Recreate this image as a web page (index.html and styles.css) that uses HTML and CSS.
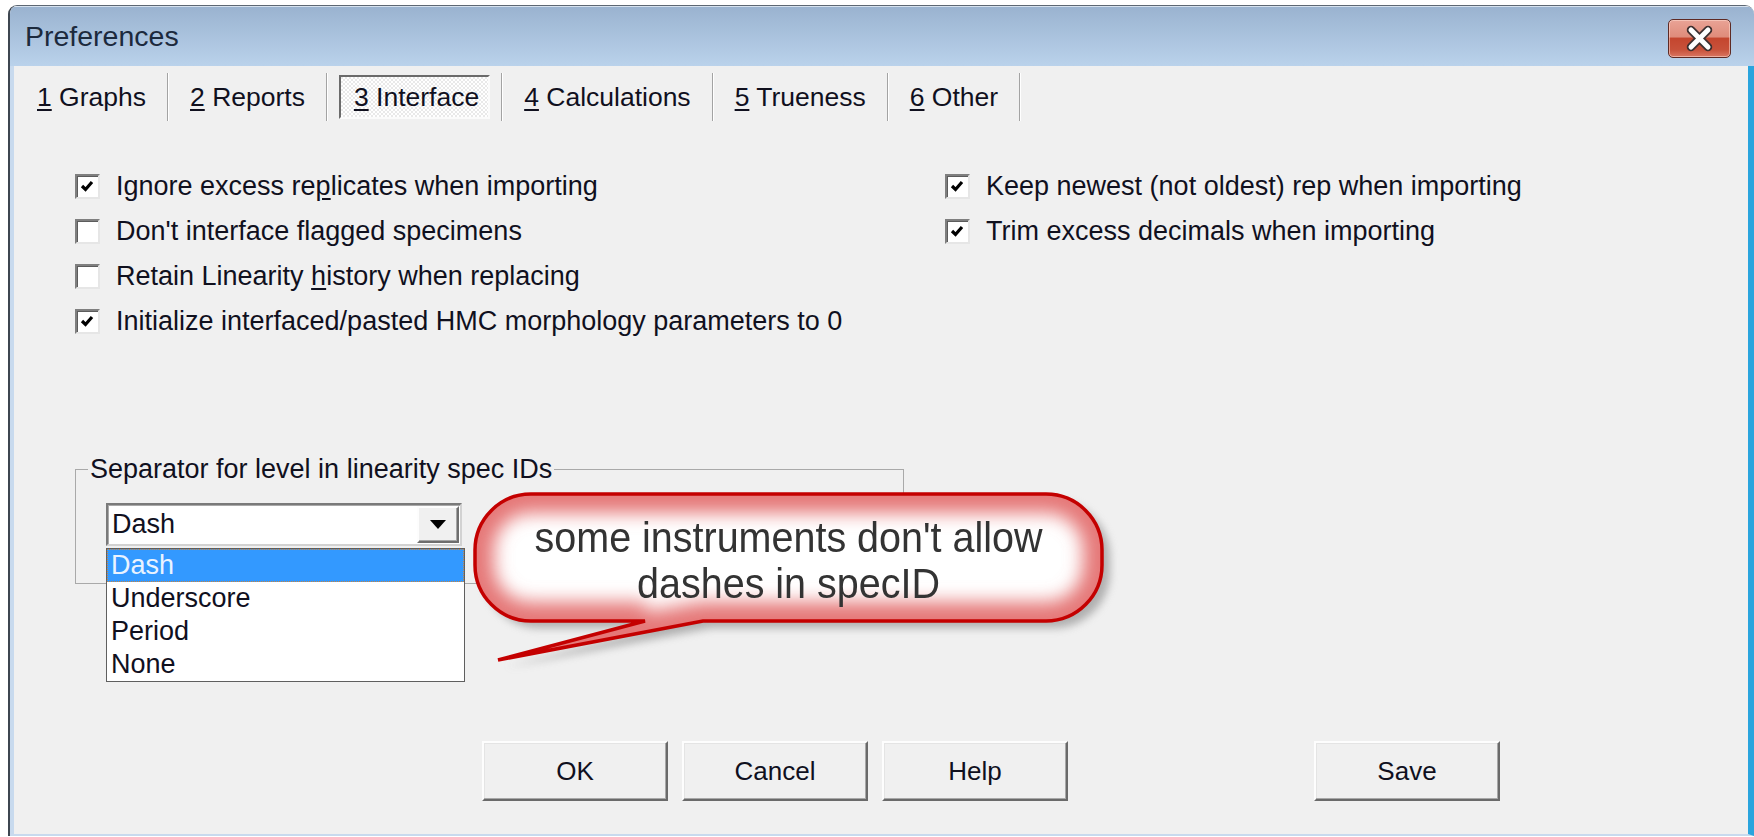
FILE: index.html
```html
<!DOCTYPE html>
<html lang="en">
<head>
<meta charset="utf-8">
<title>Preferences</title>
<link rel="stylesheet" href="styles.css">
</head>
<body>
<div class="window">
  <div class="titlebar">
    <span class="title">Preferences</span>
    <button class="close" type="button" aria-label="Close">
      <svg width="63" height="39" viewBox="0 0 63 39">
        <path d="M23 11 L40 28 M40 11 L23 28" stroke="#3d3030" stroke-width="8.5" stroke-linecap="round"/>
        <path d="M23 11 L40 28 M40 11 L23 28" stroke="#ffffff" stroke-width="5" stroke-linecap="round"/>
      </svg>
    </button>
  </div>

  <div class="client">
    <nav class="tabs">
      <div class="tab"><span><u>1</u> Graphs</span></div>
      <span class="sep"></span>
      <div class="tab"><span><u>2</u> Reports</span></div>
      <span class="sep"></span>
      <div class="tab active"><span><u>3</u> Interface</span></div>
      <span class="sep"></span>
      <div class="tab"><span><u>4</u> Calculations</span></div>
      <span class="sep"></span>
      <div class="tab"><span><u>5</u> Trueness</span></div>
      <span class="sep"></span>
      <div class="tab"><span><u>6</u> Other</span></div>
      <span class="sep"></span>
    </nav>

    <div class="options">
      <div class="col col-left">
        <div class="check">
          <span class="box"><svg viewBox="0 0 21 21"><path d="M5 10 L8.5 13.5 L15 6" /></svg></span>
          <span>Ignore excess re<u>p</u>licates when importing</span>
        </div>
        <div class="check">
          <span class="box"></span>
          <span>Don't interface flagged specimens</span>
        </div>
        <div class="check">
          <span class="box"></span>
          <span>Retain Linearity <u>h</u>istory when replacing</span>
        </div>
        <div class="check">
          <span class="box"><svg viewBox="0 0 21 21"><path d="M5 10 L8.5 13.5 L15 6" /></svg></span>
          <span>Initialize interfaced/pasted HMC morphology parameters to 0</span>
        </div>
      </div>
      <div class="col">
        <div class="check">
          <span class="box"><svg viewBox="0 0 21 21"><path d="M5 10 L8.5 13.5 L15 6" /></svg></span>
          <span>Keep newest (not oldest) rep when importing</span>
        </div>
        <div class="check">
          <span class="box"><svg viewBox="0 0 21 21"><path d="M5 10 L8.5 13.5 L15 6" /></svg></span>
          <span>Trim excess decimals when importing</span>
        </div>
      </div>
    </div>

    <fieldset class="group">
      <legend>Separator for level in linearity spec IDs</legend>
      <div class="combo">
        <span class="combo-value">Dash</span>
        <span class="combo-btn">
          <svg width="16" height="9" viewBox="0 0 16 9"><path d="M0 0 H16 L8 9 Z" fill="#000"/></svg>
        </span>
        <ul class="combo-list">
          <li class="selected">Dash</li>
          <li>Underscore</li>
          <li>Period</li>
          <li>None</li>
        </ul>
      </div>
    </fieldset>

    <div class="buttons">
      <button class="btn" type="button">OK</button>
      <button class="btn" type="button">Cancel</button>
      <button class="btn" type="button">Help</button>
      <button class="btn save" type="button">Save</button>
    </div>

    <div class="callout">
      <svg class="bubble" width="627" height="127" viewBox="0 0 627 127">
        <defs>
          <path id="bubble-shape" d="M56 0 H571 A56 56 0 0 1 627 56 V71 A56 56 0 0 1 571 127 H228 L23 166 L170 127 H56 A56 56 0 0 1 0 71 V56 A56 56 0 0 1 56 0 Z"/>
          <clipPath id="bubble-clip"><use href="#bubble-shape"/></clipPath>
          <filter id="glow" x="-20%" y="-40%" width="140%" height="180%"><feGaussianBlur stdDeviation="9"/></filter>
          <filter id="drop" x="-20%" y="-40%" width="140%" height="180%"><feGaussianBlur stdDeviation="4"/></filter>
        </defs>
        <use href="#bubble-shape" fill="#7a7a7a" opacity="0.55" transform="translate(8 7)" filter="url(#drop)"/>
        <use href="#bubble-shape" fill="#ffffff"/>
        <g clip-path="url(#bubble-clip)">
          <use href="#bubble-shape" fill="none" stroke="#e57878" stroke-width="38" filter="url(#glow)"/>
        </g>
        <use href="#bubble-shape" fill="none" stroke="#c40000" stroke-width="3.5"/>
      </svg>
      <div class="callout-text">some instruments don't allow<br>dashes in specID</div>
    </div>
  </div>
</div>
</body>
</html>
```

FILE: styles.css
```css
* {
  box-sizing: border-box;
}

html,
body {
  margin: 0;
}

body {
  width: 1754px;
  height: 837px;
  overflow: hidden;
  background: #ffffff;
  font-family: "Liberation Sans", Arial, sans-serif;
  color: #10101e;
}

u {
  text-decoration-thickness: 2px;
  text-underline-offset: 3px;
}

/* ---- window frame ---- */
.window {
  margin: 5px 0 0 8px;
  border-top: 1px solid #5d6773;
  border-left: 2px solid #3e4650;
  border-top-left-radius: 9px;
  border-top-right-radius: 9px;
  overflow: hidden;
}

.titlebar {
  height: 60px;
  display: flex;
  align-items: flex-start;
  padding: 0 23px 0 15px;
  background: linear-gradient(#9ab3d0, #bad2eb);
  border-top: 1px solid #d6e2ef;
}

.title {
  margin-top: 13px;
  font-size: 28.5px;
  line-height: 32px;
  color: #1c2a3d;
}

.close {
  margin: 12px 0 0 auto;
  width: 63px;
  height: 39px;
  padding: 0;
  border: 1px solid #5e2a24;
  border-radius: 5px;
  background: linear-gradient(#e9a396 0%, #df8c7b 45%, #c4462f 50%, #c8513a 80%, #d97662 100%);
  box-shadow: inset 0 0 0 1px rgba(255, 220, 210, 0.55);
}

.close svg {
  display: block;
  margin: -1px;
}

.client {
  position: relative;
  background: #f0f0f0;
  border-left: 4px solid #c8daee;
  border-right: 6px solid #2aa4dd;
  border-bottom: 2px solid #c8daee;
  padding-bottom: 33px;
}

/* ---- tab strip ---- */
.tabs {
  display: flex;
  align-items: center;
  height: 62px;
  padding-left: 23px;
}

.tab {
  font-size: 26.5px;
  line-height: 30px;
  padding: 0 21px;
  white-space: nowrap;
}

.tab:first-child {
  padding-left: 0;
}

.tab.active {
  display: flex;
  align-items: center;
  height: 44px;
  margin: 0 11px;
  padding: 0 9px 0 13px;
  border: 2px solid;
  border-color: #6b6b6b #fbfbfb #fbfbfb #6b6b6b;
  background-color: #f6f6f6;
  background-image: repeating-conic-gradient(#ffffff 0 25%, #e9e9e9 0 50%);
  background-size: 4px 4px;
}

.sep {
  width: 2px;
  height: 48px;
  border-left: 1px solid #a3a3a3;
  border-right: 1px solid #ffffff;
}

/* ---- checkbox options ---- */
.options {
  display: flex;
  margin-top: 36px;
  padding-left: 61px;
}

.col-left {
  width: 870px;
}

.check {
  display: flex;
  align-items: center;
  gap: 16px;
  height: 45px;
  font-size: 27px;
  white-space: nowrap;
}

.box {
  flex: none;
  width: 25px;
  height: 25px;
  background: #ffffff;
  border: 2px solid;
  border-color: #7f7f7f #e6e6e6 #e6e6e6 #7f7f7f;
  box-shadow: inset 1px 1px 0 #5c5c5c;
}

.box svg {
  display: block;
  width: 21px;
  height: 21px;
}

.box path {
  fill: none;
  stroke: #000000;
  stroke-width: 3.2;
}

/* ---- separator group ---- */
.group {
  width: 829px;
  margin: 110px 0 0 61px;
  padding: 0 0 37px 12px;
  border: 1px solid #a9a9a9;
  min-inline-size: 0;
}

.group legend {
  padding: 0 2px;
  font-size: 27px;
  line-height: 30px;
}

.combo {
  position: relative;
  width: 356px;
  height: 43px;
  margin: 19px 0 0 18px;
  background: #ffffff;
  border: 2px solid;
  border-color: #7a7a7a #d2d2d2 #d2d2d2 #7a7a7a;
  box-shadow: inset 1px 1px 0 #a9a9a9;
}

.combo-value {
  display: block;
  padding-left: 4px;
  font-size: 27px;
  line-height: 39px;
}

.combo-btn {
  position: absolute;
  top: 1px;
  right: 1px;
  width: 42px;
  height: 37px;
  display: flex;
  align-items: center;
  justify-content: center;
  background: #f0f0f0;
  border: 2px solid;
  border-color: #fdfdfd #6e6e6e #6e6e6e #fdfdfd;
  box-shadow: inset -1px -1px 0 #a5a5a5;
}

.combo-list {
  position: absolute;
  top: 43px;
  left: -2px;
  width: 359px;
  margin: 0;
  padding: 0;
  list-style: none;
  background: #ffffff;
  border: 1px solid #5f5f5f;
  z-index: 2;
}

.combo-list li {
  height: 33px;
  padding-left: 4px;
  font-size: 27px;
  line-height: 33px;
}

.combo-list li.selected {
  background: #3399ff;
  color: #eaf3ff;
  outline: 1px dotted #c9843e;
  outline-offset: -1px;
}

/* ---- command buttons ---- */
.buttons {
  display: flex;
  gap: 14px;
  margin-top: 157px;
  padding-left: 468px;
}

.btn {
  width: 186px;
  height: 60px;
  padding: 0;
  font-family: "Liberation Sans", Arial, sans-serif;
  font-size: 26px;
  color: #10101e;
  background: #f0f0f0;
  border: 2px solid;
  border-color: #fdfdfd #6a6a6a #6a6a6a #fdfdfd;
  box-shadow: inset -1px -1px 0 #a8a8a8, inset 1px 1px 0 #e4e4e4;
}

.btn.save {
  margin-left: 232px;
}

/* ---- annotation balloon ---- */
.callout {
  position: absolute;
  left: 461px;
  top: 428px;
  width: 627px;
  height: 127px;
  z-index: 3;
}

.bubble {
  position: absolute;
  left: 0;
  top: 0;
  overflow: visible;
}

.callout-text {
  position: relative;
  padding-top: 21px;
  text-align: center;
  font-size: 42px;
  line-height: 46px;
  color: #333333;
  transform: scaleX(0.94);
}
```
